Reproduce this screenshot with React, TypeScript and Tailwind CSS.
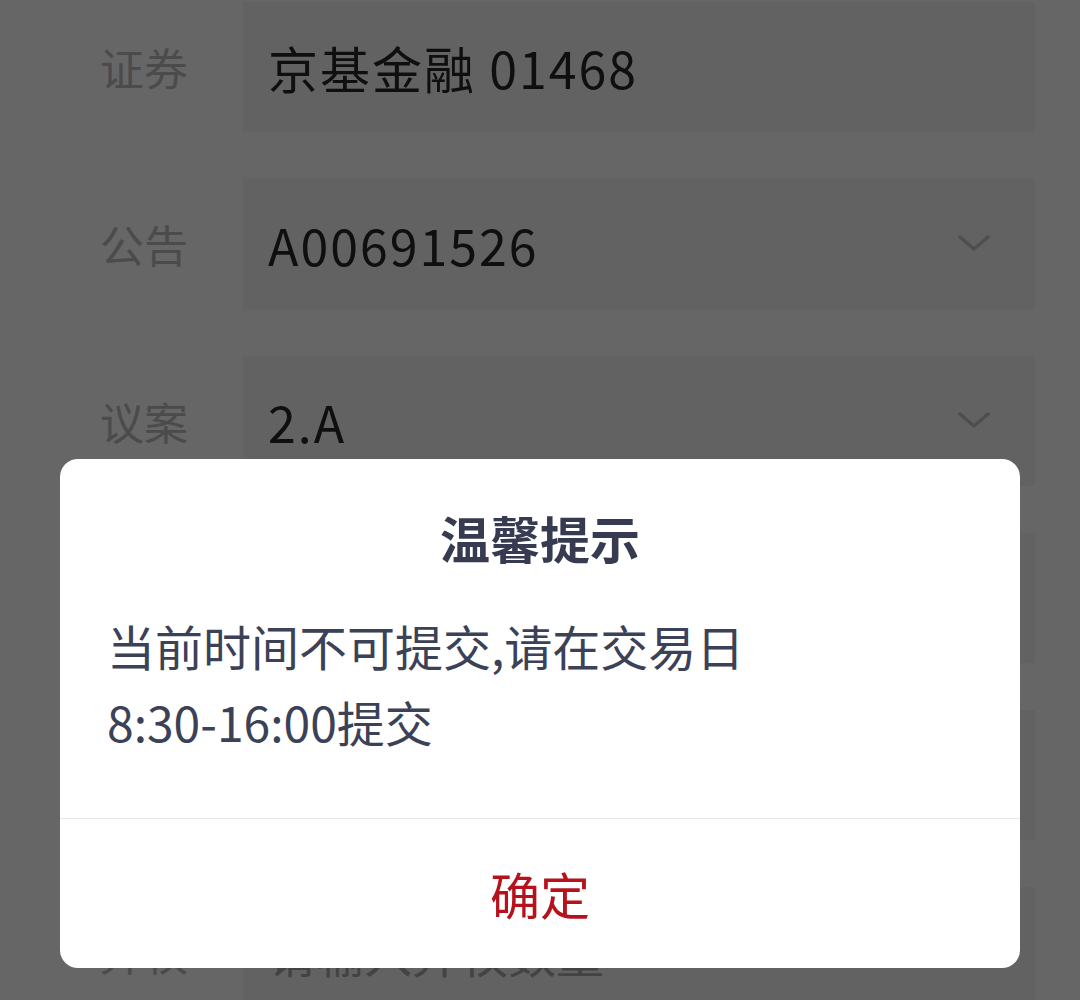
const rows = [
  { label: "证券", value: "京基金融 01468", select: false },
  { label: "公告", value: "A00691526", select: true },
  { label: "议案", value: "2.A", select: true },
  { label: "赞成", placeholder: "请输入赞成数量" },
  { label: "反对", placeholder: "请输入反对数量" },
  { label: "弃权", placeholder: "请输入弃权数量" },
];

const Chevron = () => (
  <svg width="32" height="18" viewBox="0 0 32 18" fill="none">
    <path d="M2 2 L16 14 L30 2" stroke="#c4c4c4" strokeWidth="3.5" strokeLinecap="round" strokeLinejoin="round" />
  </svg>
);

export default function App() {
  return (
    <div
      className="relative w-[1080px] h-[1000px] overflow-hidden bg-white"
      style={{ fontFamily: '"Noto Sans CJK SC", "Noto Sans", sans-serif' }}
    >
      {/* 表单 */}
      <div className="flex flex-col gap-[47px] pt-[2px] pl-[100px] pr-[45px]">
        {rows.map((row, i) => (
          <div key={i} className="flex items-center h-[130px]">
            <div className="w-[143px] text-[44px] text-[#bcbcbc] leading-none">{row.label}</div>
            <div className="flex-1 h-full flex items-center justify-between bg-[#f5f5f5] pl-[25px] pr-[45px]">
              {row.value ? (
                <span className="text-[50px] text-[#262626] leading-none tracking-[2px]">{row.value}</span>
              ) : (
                <span className="text-[48px] text-[#a8a8a8] leading-none">{row.placeholder}</span>
              )}
              {row.select && <Chevron />}
            </div>
          </div>
        ))}
      </div>

      {/* 遮罩 + 弹窗 */}
      <div className="absolute inset-0 bg-black/60">
        <div className="absolute left-[60px] top-[459px] w-[960px] h-[509px] bg-white rounded-[18px] flex flex-col">
          <div className="pt-[48px] text-center text-[50px] leading-[60px] font-bold text-[#363b52]">温馨提示</div>
          <div className="mt-[40px] px-[47px] text-[48px] leading-[76px] text-[#3b4156]">
            当前时间不可提交,请在交易日
            <br />
            8:30-16:00提交
          </div>
          <div className="mt-auto border-t border-[#e6e6e6] h-[150px] flex items-center justify-center text-[50px] text-[#b5121b]">
            确定
          </div>
        </div>
      </div>
    </div>
  );
}
